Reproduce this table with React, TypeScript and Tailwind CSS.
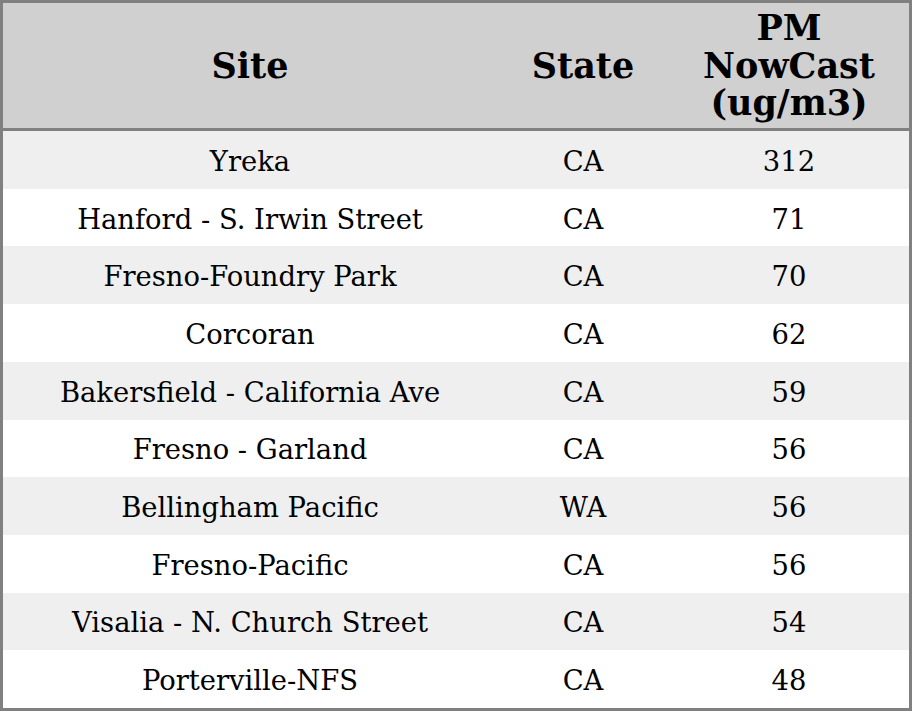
const rows: [string, string, string][] = [
  ["Yreka", "CA", "312"],
  ["Hanford - S. Irwin Street", "CA", "71"],
  ["Fresno-Foundry Park", "CA", "70"],
  ["Corcoran", "CA", "62"],
  ["Bakersfield - California Ave", "CA", "59"],
  ["Fresno - Garland", "CA", "56"],
  ["Bellingham Pacific", "WA", "56"],
  ["Fresno-Pacific", "CA", "56"],
  ["Visalia - N. Church Street", "CA", "54"],
  ["Porterville-NFS", "CA", "48"],
];

export default function App() {
  return (
    <div className="w-[912px] h-[711px] bg-white font-['DejaVu_Serif',serif] text-black">
      <div className="border-[3px] border-[#808080] h-full flex flex-col">
        <div className="grid grid-cols-[494px_172px_1fr] h-[128px] shrink-0 bg-[#d0d0d0] border-b-[3px] border-[#808080] items-center text-center font-bold text-[35px] leading-[37.5px]">
          <div>Site</div>
          <div>State</div>
          <div>
            PM
            <br />
            NowCast
            <br />
            (ug/m3)
          </div>
        </div>
        {rows.map(([site, state, pm], i) => (
          <div
            key={site}
            className={`grid grid-cols-[494px_172px_1fr] flex-1 items-center pt-1 text-center text-[27.4px] leading-[32px] ${
              i % 2 === 0 ? "bg-[#efefef]" : "bg-white"
            }`}
          >
            <div>{site}</div>
            <div>{state}</div>
            <div>{pm}</div>
          </div>
        ))}
      </div>
    </div>
  );
}
